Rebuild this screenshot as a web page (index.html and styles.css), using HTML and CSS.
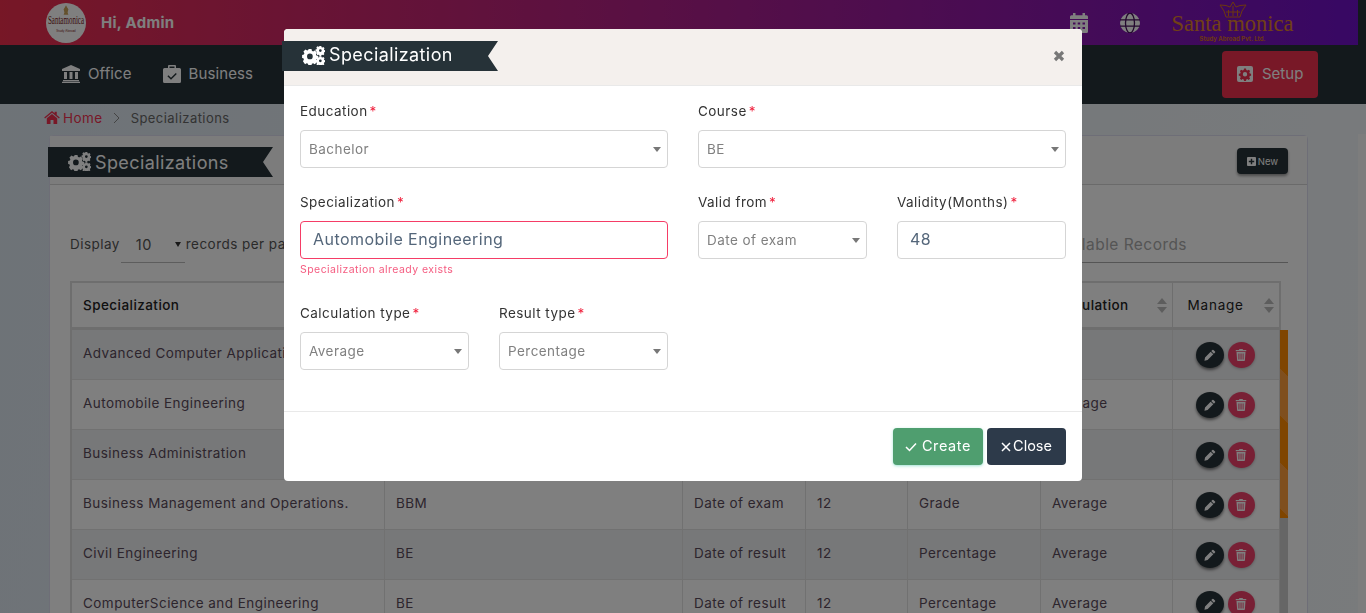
FILE: index.html
```html
<!DOCTYPE html>
<html lang="en">
<head>
<meta charset="utf-8">
<title>Specializations</title>
<link rel="stylesheet" href="styles.css">
</head>
<body>
<svg class="defs" width="0" height="0" aria-hidden="true">
  <defs>
    <symbol id="cogs" viewBox="0 0 24 20">
      <g fill="currentColor" fill-rule="evenodd">
        <path d="M6.600 3.200h3.300l.4 1.900 1.300.6 1.700-1 2.200 2.200-1 1.700.6 1.400 1.900.4v3.100l-1.900.4-.6 1.400 1 1.700-2.200 2.200-1.700-1-1.300.6-.4 1.600H6.600l-.4-1.700-1.400-.5-1.700 1L.9 16l1-1.700-.5-1.400L0 12.500V9.400l1.900-.4.5-1.400-1-1.700 2.200-2.200 1.700 1 1.400-.6zM8.200 8a3 3 0 1 0 0 6 3 3 0 0 0 0-6z"/>
        <path d="M18.300 0h1.900l.3 1.200.9.4 1-.6 1.200 1.300-.6 1 .3.9 1.200.3v1.800l-1.200.3-.4.9.6 1-1.200 1.300-1-.6-.9.4-.3 1.100h-1.800l-.3-1.100-.9-.4-1 .6L15 7.800l.6-1-.4-.9-1.100-.3V3.800l1.100-.3.4-.9-.6-1 1.100-1.300 1 .6.9-.4zm.9 3.400a1.400 1.400 0 1 0 0 2.900 1.400 1.400 0 0 0 0-2.900z"/>
        <path d="M18.300 10.700h1.900l.3 1.100.9.4 1-.6 1.200 1.300-.6 1 .3.9 1.200.3v1.800l-1.200.3-.4.9.6 1-1.200 1.200-1-.5-.9.3-.3.9h-1.800l-.3-.9-.9-.4-1 .6-1.100-1.200.6-1-.4-.9-1.100-.3v-1.800l1.100-.3.4-.9-.6-1 1.100-1.300 1 .6.9-.4zm.9 3.400a1.400 1.400 0 1 0 0 2.900 1.400 1.400 0 0 0 0-2.900z"/>
      </g>
    </symbol>
    <symbol id="pencil" viewBox="0 0 16 16">
      <path fill="currentColor" d="M11.200 1.300a1 1 0 0 1 1.400 0l2.100 2.100a1 1 0 0 1 0 1.400l-1.500 1.500-3.500-3.500zM8.900 3.600l3.500 3.500-7.600 7.600-4.200.8.8-4.300z"/>
    </symbol>
    <symbol id="trash" viewBox="0 0 14 16">
      <path fill="currentColor" fill-rule="evenodd" d="M5 0h4l1 1.200h4v1.700H0V1.200h4zM1 4h12l-.8 11a1 1 0 0 1-1 1H2.800a1 1 0 0 1-1-1zm2.600 2v8h1.300V6zm2.800 0v8h1.300V6zm2.800 0v8h1.200V6z"/>
    </symbol>
  </defs>
</svg>

<div class="page">
  <div class="topwrap">
    <header class="topbar">
      <div class="brand">
        <div class="avatar">
          <svg class="avatar-crown" viewBox="0 0 10 12" width="8" height="10"><path fill="#c9a35a" d="M5 0l1.500 3L8 5 7 9l1 3H2l1-3-1-4 1.500-2z"/></svg>
          <span class="avatar-text">Santamonica</span>
          <span class="avatar-sub">Study Abroad</span>
        </div>
        <span class="hi">Hi, Admin</span>
      </div>
      <div class="top-right">
        <svg class="ic-cal" viewBox="0 0 18 20" width="18" height="20"><path fill="currentColor" fill-rule="evenodd" d="M3 0h2.500v2.200h7V0H15v2.200h1.500A1.500 1.500 0 0 1 18 3.700V6H0V3.700a1.500 1.500 0 0 1 1.500-1.500H3zM0 7h18v11.500a1.500 1.500 0 0 1-1.500 1.500h-15A1.500 1.500 0 0 1 0 18.500zm3 2.500v2h2.500v-2zm4.700 0v2h2.500v-2zm4.800 0v2H15v-2zM3 14v2h2.500v-2zm4.700 0v2h2.500v-2zm4.800 0v2H15v-2z"/></svg>
        <svg class="ic-globe" viewBox="0 0 20 20" width="20" height="20"><circle cx="10" cy="10" r="10" fill="currentColor"/><g fill="none" stroke="#47105c" stroke-width="1.300"><ellipse cx="10" cy="10" rx="4.500" ry="10"/><path d="M0 6.800h20M0 13.200h20"/></g></svg>
        <div class="logo">
          <svg class="crown" viewBox="0 0 28 18" width="28" height="18"><g fill="none" stroke="#d9701f" stroke-width="1"><path d="M14 1l3 5 4-1.500L27 4l-4 6-2 6H7l-2-6-4-6 6 .5L11 6z"/><path d="M7 11h14M9.500 15V9M14 15V5M18.500 15V9"/></g></svg>
          <div class="logo-name">Santa monica</div>
          <div class="logo-sub">Study Abroad Pvt. Ltd.</div>
        </div>
      </div>
    </header>
  </div>

  <nav class="navbar">
    <div class="nav-items">
      <a class="nav-item">
        <svg viewBox="0 0 18 18" width="18" height="18"><path fill="currentColor" d="M9 0l9 4v2H0V4zM2 7h3v7H2zm5.500 0h3v7h-3zM13 7h3v7h-3zM1 15h16v1.300H1zM0 16.800h18V18H0z"/></svg>
        Office
      </a>
      <a class="nav-item">
        <svg viewBox="0 0 18 18" width="18" height="18"><path fill="currentColor" fill-rule="evenodd" d="M6 0h6a1 1 0 0 1 1 1v2h3.500A1.500 1.500 0 0 1 18 4.500v12a1.500 1.500 0 0 1-1.500 1.500h-15A1.500 1.500 0 0 1 0 16.500v-12A1.500 1.500 0 0 1 1.500 3H5V1a1 1 0 0 1 1-1zm.500 1.500V3h5V1.500zM12.800 8L8 12.700 5.400 10.200l-1 1L8 14.800l5.800-5.800z"/></svg>
        Business
      </a>
    </div>
    <a class="setup">
      <svg viewBox="0 0 16 16" width="16" height="16"><path fill="currentColor" fill-rule="evenodd" d="M2 0h12a2 2 0 0 1 2 2v12a2 2 0 0 1-2 2H2a2 2 0 0 1-2-2V2a2 2 0 0 1 2-2zm5 2.500l-.3 1.500-1.100.5-1.300-.8-1.400 1.400.8 1.300-.5 1.100-1.400.3v2l1.400.3.5 1.100-.8 1.300 1.400 1.400 1.300-.8 1.100.5.3 1.300h2l.3-1.300 1.100-.5 1.300.8 1.400-1.400-.8-1.300.5-1.100 1.300-.3v-2l-1.300-.3-.5-1.100.8-1.300-1.400-1.400-1.300.8L9.300 4 9 2.500zM8 6a2.200 2.200 0 1 1 0 4.400A2.200 2.200 0 0 1 8 6z"/></svg>
      Setup
    </a>
  </nav>

  <main class="content">
    <div class="crumbs">
      <svg class="ic-home" viewBox="0 0 18 15" width="16" height="13"><path fill="currentColor" d="M9 0l3 2.500V1h2.500v3.600L18 7.600l-1 1.100-8-6.600-8 6.600-1-1.100zM9 3.400l6 5V15h-4.300v-4.500H7.300V15H3V8.400z"/></svg>
      <span class="crumb-home">Home</span>
      <svg class="crumb-sep" viewBox="0 0 8 12" width="8" height="12"><path d="M1 1l5 5-5 5" fill="none" stroke="currentColor" stroke-width="1"/></svg>
      <span class="crumb-cur">Specializations</span>
    </div>

    <section class="card">
      <div class="card-head">
        <h2 class="ribbon ribbon-page"><svg class="ic-cogs"><use href="#cogs"/></svg><span>Specializations</span></h2>
        <button class="btn-new"><svg viewBox="0 0 10 10" width="9" height="9"><path fill="currentColor" fill-rule="evenodd" d="M1 0h8a1 1 0 0 1 1 1v8a1 1 0 0 1-1 1H1a1 1 0 0 1-1-1V1a1 1 0 0 1 1-1zm3.200 2v2.200H2v1.600h2.200V8h1.600V5.800H8V4.200H5.800V2z"/></svg>New</button>
      </div>
      <div class="card-body">
        <div class="tools">
          <div class="display">
            <span>Display</span>
            <span class="len"><span class="len-val">10</span><i class="len-caret"></i></span>
            <span>records per page</span>
          </div>
          <div class="search">Search Available Records</div>
        </div>
        <div class="table-wrap">
          <table class="grid">
            <colgroup>
              <col class="c1"><col class="c2"><col class="c3"><col class="c4"><col class="c5"><col class="c6"><col class="c7">
            </colgroup>
            <thead>
              <tr>
                <th>Specialization</th><th>Course</th><th>Valid from</th><th>Validity</th><th>Result type</th>
                <th class="sortable">Calculation<i class="sort"></i></th>
                <th class="sortable th-manage">Manage<i class="sort"></i></th>
              </tr>
            </thead>
            <tbody>
              <tr><td>Advanced Computer Applications</td><td>MCA</td><td>Date of exam</td><td>12</td><td>Percentage</td><td></td><td class="acts"><a class="act act-edit"><svg><use href="#pencil"/></svg></a><a class="act act-del"><svg><use href="#trash"/></svg></a></td></tr>
              <tr><td>Automobile Engineering</td><td>BE</td><td>Date of exam</td><td>48</td><td>Percentage</td><td>Average</td><td class="acts"><a class="act act-edit"><svg><use href="#pencil"/></svg></a><a class="act act-del"><svg><use href="#trash"/></svg></a></td></tr>
              <tr><td>Business Administration</td><td>BBA</td><td>Date of exam</td><td>12</td><td>Grade</td><td></td><td class="acts"><a class="act act-edit"><svg><use href="#pencil"/></svg></a><a class="act act-del"><svg><use href="#trash"/></svg></a></td></tr>
              <tr><td>Business Management and Operations.</td><td>BBM</td><td>Date of exam</td><td>12</td><td>Grade</td><td>Average</td><td class="acts"><a class="act act-edit"><svg><use href="#pencil"/></svg></a><a class="act act-del"><svg><use href="#trash"/></svg></a></td></tr>
              <tr><td>Civil Engineering</td><td>BE</td><td>Date of result</td><td>12</td><td>Percentage</td><td>Average</td><td class="acts"><a class="act act-edit"><svg><use href="#pencil"/></svg></a><a class="act act-del"><svg><use href="#trash"/></svg></a></td></tr>
              <tr><td>ComputerScience and Engineering</td><td>BE</td><td>Date of result</td><td>12</td><td>Percentage</td><td>Average</td><td class="acts"><a class="act act-edit"><svg><use href="#pencil"/></svg></a><a class="act act-del"><svg><use href="#trash"/></svg></a></td></tr>
            </tbody>
          </table>
          <div class="vscroll"><div class="vthumb"></div></div>
        </div>
      </div>
    </section>
  </main>
  <div class="page-scroll"></div>
</div>

<div class="overlay">
  <div class="modal">
    <div class="modal-head">
      <h3 class="ribbon ribbon-modal"><svg class="ic-cogs"><use href="#cogs"/></svg><span class="rib-text">Specialization</span></h3>
      <svg class="modal-x" viewBox="0 0 12 12" width="12" height="12"><path d="M2 2l8 8M10 2l-8 8" fill="none" stroke="currentColor" stroke-width="3.200"/></svg>
    </div>
    <form class="modal-body">
      <div class="field span2">
        <label class="lbl">Education<b>*</b></label>
        <div class="ctl sel">Bachelor</div>
      </div>
      <div class="field span2">
        <label class="lbl">Course<b>*</b></label>
        <div class="ctl sel">BE</div>
      </div>
      <div class="field span2">
        <label class="lbl">Specialization<b>*</b></label>
        <div class="ctl input err">Automobile Engineering</div>
        <div class="errmsg">Specialization already exists</div>
      </div>
      <div class="field">
        <label class="lbl">Valid from<b>*</b></label>
        <div class="ctl sel">Date of exam</div>
      </div>
      <div class="field">
        <label class="lbl">Validity(Months)<b>*</b></label>
        <div class="ctl input num">48</div>
      </div>
      <div class="field">
        <label class="lbl">Calculation type<b>*</b></label>
        <div class="ctl sel">Average</div>
      </div>
      <div class="field">
        <label class="lbl">Result type<b>*</b></label>
        <div class="ctl sel">Percentage</div>
      </div>
    </form>
    <div class="modal-foot">
      <button class="btn btn-create"><svg viewBox="0 0 12 10" width="12" height="10"><path d="M1 5l3.500 3.500L11 1.500" fill="none" stroke="currentColor" stroke-width="1.500"/></svg><span class="btn-text">Create</span></button>
      <button class="btn btn-close"><svg viewBox="0 0 10 10" width="10" height="10"><path d="M1 1l8 8M9 1l-8 8" fill="none" stroke="currentColor" stroke-width="1.500"/></svg><span class="btn-text">Close</span></button>
    </div>
  </div>
</div>
</body>
</html>
```
FILE: styles.css
```css
* { box-sizing: border-box; }
html, body { margin: 0; height: 613px; overflow: hidden; }
body { font-family: Inter, "Noto Sans", "Liberation Sans", sans-serif; color: #444; font-size: 14px; letter-spacing: .45px; }
.defs { display: block; height: 0; }
.page { position: relative; height: 613px; overflow: hidden; background: linear-gradient(100deg, #dce6ef 0%, #f2f6f9 100%); }

.topwrap { background: #263238; height: 45px; padding-right: 8px; }
.topbar { height: 45px; background: linear-gradient(90deg, #ee2f4d 0%, #6f10c8 100%); display: flex; align-items: center; justify-content: space-between; padding: 0 65px 0 46px; }
.brand { display: flex; align-items: center; gap: 15px; }
.avatar { width: 40px; height: 40px; border-radius: 50%; background: #fff; display: flex; flex-direction: column; align-items: center; overflow: hidden; color: #7a1a1a; letter-spacing: 0; }
.avatar-crown { display: block; flex: none; margin-top: 2px; }
.avatar-text { font-family: "Liberation Serif", serif; font-size: 7px; line-height: 12px; height: 12px; white-space: nowrap; transform: scaleY(1.7); }
.avatar-sub { font-size: 3px; line-height: 4px; margin-top: 2px; white-space: nowrap; }
.hi { color: #fff; font-weight: 700; font-size: 15px; letter-spacing: .3px; }
.top-right { display: flex; align-items: center; color: #fff; }
.ic-cal { margin-right: 32px; }
.ic-globe { margin-right: 32px; }
.logo { width: 121px; height: 45px; display: flex; flex-direction: column; align-items: center; position: relative; letter-spacing: 0; }
.crown { display: block; margin-top: 1px; height: 18px; flex: none; }
.logo-name { font-family: "Liberation Serif", serif; font-size: 22.500px; line-height: 16px; color: #e2802a; margin-top: -3px; white-space: nowrap; }
.logo-sub { font-size: 6px; line-height: 8px; font-weight: 700; color: #d9701f; margin-top: 3px; white-space: nowrap; }

.navbar { height: 59px; background: #263238; display: flex; align-items: center; justify-content: space-between; padding: 0 48px 0 62px; }
.nav-items { display: flex; gap: 31px; padding-bottom: 2px; }
.nav-item { display: flex; align-items: center; gap: 8px; color: #fff; font-size: 15px; letter-spacing: .1px; }
.setup { display: flex; align-items: center; gap: 9px; width: 96px; height: 47px; padding: 0 0 2px 15px; background: #f0304f; border-radius: 4px; color: #fff; font-size: 15px; letter-spacing: 0; }

.content { padding: 0 58px 0 49px; }
.crumbs { height: 31px; display: flex; align-items: center; gap: 3px; font-size: 13px; padding-bottom: 4px; margin-left: -5px; }
.ic-home { color: #f0304f; }
.crumb-home { color: #f0304f; font-size: 13.500px; }
.crumb-sep { color: #888; margin: 0 7px; }
.crumb-cur { color: #666; }

.card { background: #fff; border: 1px solid #dde; border-radius: 4px; }
.card-head { height: 49px; display: flex; align-items: center; justify-content: space-between; border-bottom: 1px solid #d5d5d5; background: #f9f9f9; padding-right: 19px; }
.ribbon { margin: 0; display: flex; align-items: center; color: #fff; font-weight: 400; background: #263238; clip-path: polygon(0 0, 100% 0, calc(100% - 10px) 50%, 100% 100%, 0 100%); height: 30px; letter-spacing: .4px; }
.rib-text { padding-bottom: 3px; }
.ribbon-page { width: 225px; margin: 4px 0 0 -2px; padding-left: 20px; font-size: 18px; }
.ic-cogs { width: 23px; height: 19px; margin-right: 4px; flex: none; margin-bottom: 2px; }
.btn-new { width: 51px; height: 26px; margin-top: 2px; background: #263238; color: #fff; border: 0; border-radius: 4px; font: 9.500px Inter, sans-serif; display: flex; align-items: center; justify-content: center; gap: 2px; padding: 0; box-shadow: 0 2px 3px rgba(0,0,0,.4); }

.card-body { padding: 0 19px 0 21px; }
.tools { height: 96px; padding-top: 42px; display: flex; justify-content: space-between; margin-left: -1px; }
.display { display: flex; align-items: flex-start; font-size: 13.500px; height: 36px; color: #555; line-height: 34px; }
.len { width: 64px; height: 36px; margin: 0 1px; border-bottom: 1px solid #bbb; display: flex; justify-content: space-between; align-items: flex-start; padding: 0 4px 0 15px; }
.len-val { font-size: 14.500px; line-height: 36px; }
.len-caret { width: 0; height: 0; border: 3.500px solid transparent; border-top: 5px solid #333; margin-top: 15px; }
.search { width: 270px; height: 36px; border-bottom: 1px solid #aaa; color: #aaa; font-size: 15.500px; line-height: 36px; padding-right: 101px; white-space: nowrap; display: flex; justify-content: flex-end; }

.table-wrap { display: flex; align-items: flex-start; position: relative; margin-left: -1px; }
.grid { width: 1209px; table-layout: fixed; border-collapse: collapse; font-size: 13.500px; border: 2px solid #ddd; flex: none; }
.c1 { width: 313px; } .c2 { width: 298px; } .c3 { width: 123px; } .c4 { width: 102px; } .c5 { width: 133px; } .c6 { width: 132px; } .c7 { width: 108px; }
.grid th { height: 46px; text-align: left; font-weight: 500; color: #222; padding: 0 11px; border: 1px solid #ddd; border-bottom: 3px solid #ddd; position: relative; }
.grid .th-manage { padding-left: 15px; font-weight: 400; letter-spacing: .8px; }
.grid td { height: 50px; padding: 0 11px 2px; border: 1px solid #e2e2e2; color: #5a4a5a; white-space: nowrap; overflow: hidden; }
.grid td + td { padding-left: 11.500px; }
.grid tbody tr:first-child td { height: 51px; padding-bottom: 3px; }
.grid tbody tr:nth-child(odd) td { background: #eff0f2; }
.sort { position: absolute; right: 5px; top: 15px; width: 0; height: 0; border: 5px solid transparent; border-bottom: 6px solid #bbb; border-top: 0; }
.sort::after { content: ""; position: absolute; left: -5px; top: 9px; width: 0; height: 0; border: 5px solid transparent; border-top: 6px solid #bbb; border-bottom: 0; }
.grid tbody tr td.acts { padding: 1px 0 0; }
.act { display: inline-flex; height: 26px; border-radius: 50%; align-items: center; justify-content: center; color: #fff; vertical-align: middle; }
.act svg { width: 12px; height: 12px; }
.act-edit { width: 28px; background: #263238; margin-left: 23px; box-shadow: 0 2px 3px rgba(0,0,0,.5); }
.act-del { width: 27px; background: #f0406a; margin-left: 4px; box-shadow: 0 1px 3px rgba(0,0,0,.25); }
.vscroll { width: 8px; height: 400px; margin: 49px 0 0 -1px; background: #ccc; flex: none; }
.vthumb { height: 188px; background: repeating-linear-gradient(225deg, #ff8a00 0 33px, #ff9f3c 33px 66px); }

.page-scroll { position: absolute; right: 0; top: 134px; bottom: 0; width: 8px; background: #fafafa; }

.overlay { position: fixed; inset: 0; background: rgba(0,0,0,.5); }
.modal { position: absolute; left: 284px; top: 29px; width: 798px; height: 452px; background: #fff; border-radius: 4px; display: flex; flex-direction: column; }
.modal-head { height: 57px; background: #f4f0ed; border-bottom: 1px solid #e9e9e9; border-radius: 4px 4px 0 0; padding: 12px 17px 0 0; display: flex; justify-content: space-between; flex: none; }
.ribbon-modal { width: 216px; margin-left: -2px; padding-left: 20px; font-size: 18px; }
.modal-x { color: #777; margin-top: 9px; }
.modal-body { flex: 1; padding: 15px 16px 0; display: grid; grid-template-columns: 169px 169px 169px 169px; column-gap: 30px; grid-template-rows: 91px 111px 80px; align-content: start; }
.field { display: flex; flex-direction: column; min-width: 0; }
.span2 { grid-column: span 2; }
.lbl { font-size: 13.500px; line-height: 20px; color: #333; margin-bottom: 9px; height: 20px; white-space: nowrap; }
.lbl b { color: #f0233f; font-weight: 400; margin-left: 2px; }
.ctl { height: 38px; border: 1px solid #d5d5d5; border-radius: 4px; font-size: 13.500px; color: #808080; display: flex; align-items: center; padding: 0 8px; position: relative; flex: none; }
.sel::after { content: ""; position: absolute; right: 6px; top: 16px; width: 0; height: 0; border: 4px solid transparent; border-top: 5px solid #777; border-bottom: 0; }
.input { font-size: 16px; color: #54667a; padding: 0 12px 2px; }
.input.err { border-color: #f53d66; }
.errmsg { color: #f55c80; font-size: 10.500px; line-height: 14px; margin-top: 4px; }
.modal-foot { height: 70px; border-top: 1px solid #e9e9e9; padding: 16px 16px 0 0; display: flex; justify-content: flex-end; gap: 4px; flex: none; }
.btn { height: 37px; border: 0; border-radius: 4px; color: #fff; font: 14.500px Inter, sans-serif; display: flex; align-items: center; justify-content: center; padding: 0; }
.btn-text { padding-bottom: 2px; }
.btn-create { width: 90px; background: #4f9e6f; gap: 5px; letter-spacing: .6px; box-shadow: 0 1px 3px rgba(70,200,170,.5); }
.btn-close { width: 79px; background: #2d3a4a; gap: 2px; letter-spacing: 0; }
```
